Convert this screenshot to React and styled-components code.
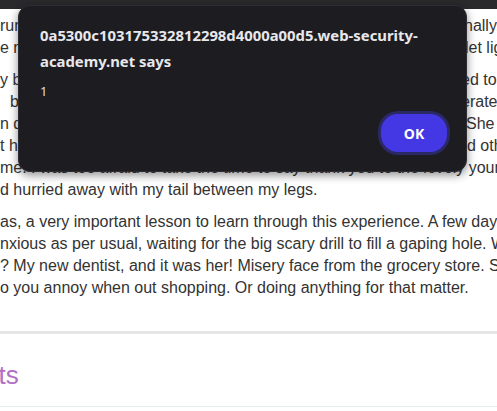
import React from "react";
import styled, { createGlobalStyle } from "styled-components";

const GlobalStyle = createGlobalStyle`
  html, body {
    margin: 0;
    padding: 0;
    background: #ffffff;
    overflow: hidden;
  }
  body {
    width: 497px;
    height: 411px;
  }
`;

// Lines of the post that sit behind the alert; `cut` is where the part that
// peeks out on the right of the dialog starts.
const paragraphs = [
  [
    { text: "rummaging through the freezer for a bag of frozen peas. Fi", tail: "nally, she", cut: 464 },
    { text: "e nearest exit, I tried my best to act natural and", tail: "let light of it", cut: 465 },
  ],
  [
    { text: "y brain told me to apologise for being so rude, but I decid", tail: "ed to", cut: 461 },
    { text: "being nice, she gave me a look that was quite exasp", tail: "erated", cut: 461, indent: 10 },
    { text: "n down the aisle to the checkout as fast as I could go.", tail: "She said", cut: 466 },
    { text: "t her shopping basket, full of fruit, vegetables an", tail: "d other", cut: 467 },
    { text: "me. I was too afraid to take the time to say thank you to the lovely young" },
    { text: "d hurried away with my tail between my legs." },
  ],
  [
    { text: "as, a very important lesson to learn through this experience. A few days" },
    { text: "nxious as per usual, waiting for the big scary drill to fill a gaping hole. W" },
    { text: "? My new dentist, and it was her! Misery face from the grocery store. S" },
    { text: "o you annoy when out shopping. Or doing anything for that matter." },
  ],
];

const App = () => {
  return (
    <Page>
      <GlobalStyle />
      <TopBar />
      <Article>
        {paragraphs.map((lines, i) => (
          <Paragraph key={i}>
            {lines.map((line, j) => {
              const indent = line.indent || 0;
              return (
                <Line key={j} $indent={indent}>
                  {line.tail ? (
                    <>
                      <Head $width={line.cut - indent}>{line.text}</Head>
                      <span>{line.tail}</span>
                    </>
                  ) : (
                    line.text
                  )}
                </Line>
              );
            })}
          </Paragraph>
        ))}
      </Article>
      <Divider />
      <Heading>Comments</Heading>
      <ThinDivider />

      <Dialog role="dialog">
        <DialogTitle>
          0a5300c103175332812298d4000a00d5.web-security-
          <br />
          academy.net says
        </DialogTitle>
        <DialogMessage>1</DialogMessage>
        <DialogFooter>
          <OkButton>OK</OkButton>
        </DialogFooter>
      </Dialog>
    </Page>
  );
};

const Page = styled.div`
  position: relative;
  width: 497px;
  height: 411px;
  overflow: hidden;
  font-family: "Liberation Sans", Arial, sans-serif;
  color: #333332;
`;

const TopBar = styled.div`
  height: 9px;
  background: #2a2a2c;
`;

const Article = styled.div`
  padding-top: 6px;
`;

const Paragraph = styled.div`
  margin-bottom: 10px;
`;

const Line = styled.div`
  display: flex;
  font-size: 16px;
  line-height: 22px;
  white-space: nowrap;
  padding-left: ${(p) => p.$indent}px;
`;

const Head = styled.span`
  flex: 0 0 ${(p) => p.$width}px;
  overflow: hidden;
`;

const Divider = styled.div`
  margin-top: 32px;
  height: 3px;
  background: #e6e6e6;
`;

const Heading = styled.h2`
  margin: 0;
  padding: 24px 0 14px;
  font-size: 26px;
  font-weight: normal;
  line-height: 34px;
  color: #b36fc4;
  white-space: nowrap;
  text-indent: -107px;
`;

const ThinDivider = styled.div`
  height: 1px;
  background: #e4ecee;
`;

const Dialog = styled.div`
  position: absolute;
  left: 18px;
  top: 5px;
  width: 449px;
  height: 167px;
  box-sizing: border-box;
  padding: 16px 16px 16px 21px;
  display: flex;
  flex-direction: column;
  background: #1d1c21;
  border: 1px solid #2e2d33;
  border-radius: 12px;
  box-shadow: 0 3px 10px rgba(0, 0, 0, 0.45);
  font-family: "Noto Sans", "Open Sans", sans-serif;
  color: #e8e8ec;
`;

const DialogTitle = styled.div`
  font-size: 14.85px;
  font-weight: 700;
  line-height: 26px;
`;

const DialogMessage = styled.div`
  margin-top: 8px;
  font-size: 13px;
  line-height: 18px;
  color: #dcdce0;
`;

const DialogFooter = styled.div`
  margin-top: auto;
  display: flex;
  justify-content: flex-end;
`;

const OkButton = styled.button`
  width: 66px;
  height: 38px;
  margin: 3px;
  border: none;
  border-radius: 17px;
  background: #4437e4;
  color: #ffffff;
  font-family: "Noto Sans", "Open Sans", sans-serif;
  font-size: 14px;
  font-weight: 700;
  box-shadow: 0 0 0 3px #2a2966;
  cursor: pointer;
`;

export default App;
